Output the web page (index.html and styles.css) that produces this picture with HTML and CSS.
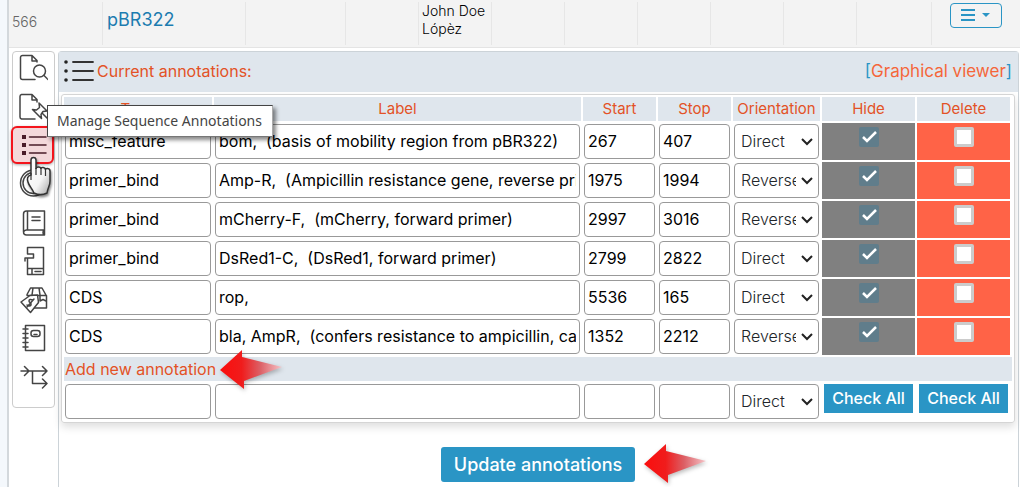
FILE: index.html
```html
<!DOCTYPE html>
<html lang="en">
<head>
<meta charset="utf-8">
<title>Sequence annotations</title>
<link rel="stylesheet" href="styles.css">
</head>
<body>
<div class="page">
  <div class="record">
    <div class="cell cell-id">566</div>
    <div class="cell"><a class="record-name" href="#plasmid">pBR322</a></div>
    <div class="cell"></div>
    <div class="cell"></div>
    <div class="cell cell-owner">John Doe Lópèz</div>
    <div class="cell"></div><div class="cell"></div><div class="cell"></div><div class="cell"></div><div class="cell"></div><div class="cell"></div>
    <div class="cell cell-menu">
      <button class="menu-button" type="button" aria-label="Record menu">
        <svg width="30" height="14" viewBox="0 0 30 14"><path d="M0 2h14M0 7h14M0 12h14" stroke="currentColor" stroke-width="2"/><path d="M21 5h8l-4 4z" fill="currentColor"/></svg>
      </button>
    </div>
  </div>

  <div class="workspace">
    <nav class="tools" aria-label="Sequence tools">
      <button class="tool" type="button" aria-label="View sequence">
        <svg class="icon" viewBox="0 0 30 30"><path d="M17 26.500H4.500a2 2 0 0 1-2-2V4.500a2 2 0 0 1 2-2H14l5 5V9M14 2.500V8h5"/><circle cx="21.500" cy="18" r="6"/><path d="m26 22.500 4 4"/></svg>
      </button>
      <button class="tool" type="button" aria-label="Pin file">
        <svg class="icon" viewBox="0 0 30 30"><path d="M17 27H3.500a2 2 0 0 1-1.500-2V4.500a2 2 0 0 1 1.500-2H14l5 5V10M14 2.500V8h5"/><path d="m21 11 8 8-4 .5-2 3 .5 4-9-9 4 .5 3-2.500zm3 10 6 6"/></svg>
      </button>
      <button class="tool tool-active" type="button" aria-label="Manage Sequence Annotations">
        <svg class="icon" viewBox="0 0 30 30"><path d="M11.500 7H28M11.500 15H28M11.500 23H28"/><path class="dots" d="M4 5h4v4H4zM4 13h4v4H4zM4 21h4v4H4z"/></svg>
      </button>
      <button class="tool" type="button" aria-label="Plasmid map">
        <svg class="icon" viewBox="0 0 30 30"><circle cx="15.500" cy="14" r="13"/><circle cx="15.500" cy="14" r="10.500"/></svg>
      </button>
      <button class="tool" type="button" aria-label="Library">
        <svg class="icon" viewBox="0 0 30 30"><path d="M26.500 22V3H8.500a3 3 0 0 0-3 3v18a3 3 0 0 0 3 3h18v-5h-18a3 3 0 0 0-3 2M9.500 3v19M14 9h8M14 12.500h8M26 22q-2 2.500 0 5"/></svg>
      </button>
      <button class="tool" type="button" aria-label="Storage">
        <svg class="icon" viewBox="0 0 30 30"><path d="M9.500 12v16.500h16V1.500h-16V8h6v4H7v3M9.500 22.500h16M14 22.500v6M17 25.500h6"/></svg>
      </button>
      <button class="tool" type="button" aria-label="Price and orders">
        <svg class="icon" viewBox="0 0 30 30"><path d="M9 9.500 12.500 3H24l4.500 8v12H16M9 10.500h19.500M15 3l-1 7M21 3l1 7v6l3-1.500 3 1.500"/><path class="tag" d="m3 17 9-6.500 7.500-.5 1 7.500-8 10z"/><path d="M15 15q-4-1.500-4 1c0 2 3 1.500 2 4-1 1.500-3 1-4 0m7-6-7 8"/></svg>
      </button>
      <button class="tool" type="button" aria-label="Notebook">
        <svg class="icon" viewBox="0 0 30 30"><path d="M7.500 2.500h19v25h-19zM5 6h5M5 10.500h5M5 15h5M5 19.500h5M5 24h5"/><rect x="13" y="7.500" width="9" height="6" rx="2.500"/><path d="M16 11.500h3"/></svg>
      </button>
      <button class="tool" type="button" aria-label="Cloning workflow">
        <svg class="icon" viewBox="0 0 30 30"><path d="M3 9h26M6.500 4.500 11 9l-4.500 4.500M24.500 4.500 29 9l-4.500 4.500M14.500 9v12.500H29M24.500 17l4.500 4.500-4.500 4.500"/></svg>
      </button>
      <span class="tooltip" role="tooltip">Manage Sequence Annotations</span>
      <svg class="pointer" viewBox="0 0 28 42" aria-hidden="true">
        <defs><linearGradient id="glove" x1="0" y1="0" x2="1" y2="1"><stop offset="0" stop-color="#fff"/><stop offset=".6" stop-color="#f4f4f4"/><stop offset="1" stop-color="#a5a5a5"/></linearGradient></defs>
        <path d="M6 4c0-3.500 5-3.500 5 0v9c0-3 5-2.500 5 0 0-2.500 4.500-2 4.500 1 0-2.500 4.500-2 4.500 1v10c0 5-2 6-3 12-4 2-9 2-13 0-2-5-5-7-6-11-1-3-1-6 3-7z" fill="url(#glove)" stroke="#333" stroke-width="1.500"/>
        <path d="M6 17v7M11 12v7M16 13v6M20.500 14v6" fill="none" stroke="#333" stroke-width="1.200"/>
      </svg>
    </nav>

    <main class="panel">
      <header class="panel-head">
        <svg class="list-icon" viewBox="0 0 30 24"><path d="M9 3h20M9 12h20M9 21h20" stroke="#333" stroke-width="1.800" stroke-linecap="round"/><g fill="#222"><circle cx="2" cy="3" r="1.800"/><circle cx="2" cy="12" r="1.800"/><circle cx="2" cy="21" r="1.800"/></g></svg>
        <h1 class="panel-title">Current annotations:</h1>
        <span class="viewer">[<a class="viewer-link" href="#viewer">Graphical viewer</a>]</span>
      </header>

      <form class="form">
        <div class="card">
          <table class="grid">
            <colgroup><col class="col-type"><col><col class="col-pos"><col class="col-pos"><col class="col-dir"><col class="col-flag"><col class="col-flag"><col class="col-end"></colgroup>
            <thead><tr><th>Type</th><th>Label</th><th>Start</th><th>Stop</th><th>Orientation</th><th>Hide</th><th>Delete</th></tr></thead>
            <tbody>
              <tr><td><input class="field" aria-label="Type" value="misc_feature"></td><td><input class="field" aria-label="Label" value="bom,  (basis of mobility region from pBR322)"></td><td><input class="field" aria-label="Start" value="267"></td><td><input class="field" aria-label="Stop" value="407"></td><td><select class="field select" aria-label="Orientation"><option selected>Direct</option><option>Reverse</option></select></td><td class="hide"><input class="check" type="checkbox" aria-label="Hide" checked></td><td class="delete"><input class="check" type="checkbox" aria-label="Delete"></td></tr>
              <tr><td><input class="field" aria-label="Type" value="primer_bind"></td><td><input class="field" aria-label="Label" value="Amp-R,  (Ampicillin resistance gene, reverse primer)"></td><td><input class="field" aria-label="Start" value="1975"></td><td><input class="field" aria-label="Stop" value="1994"></td><td><select class="field select" aria-label="Orientation"><option>Direct</option><option selected>Reverse</option></select></td><td class="hide"><input class="check" type="checkbox" aria-label="Hide" checked></td><td class="delete"><input class="check" type="checkbox" aria-label="Delete"></td></tr>
              <tr><td><input class="field" aria-label="Type" value="primer_bind"></td><td><input class="field" aria-label="Label" value="mCherry-F,  (mCherry, forward primer)"></td><td><input class="field" aria-label="Start" value="2997"></td><td><input class="field" aria-label="Stop" value="3016"></td><td><select class="field select" aria-label="Orientation"><option>Direct</option><option selected>Reverse</option></select></td><td class="hide"><input class="check" type="checkbox" aria-label="Hide" checked></td><td class="delete"><input class="check" type="checkbox" aria-label="Delete"></td></tr>
              <tr><td><input class="field" aria-label="Type" value="primer_bind"></td><td><input class="field" aria-label="Label" value="DsRed1-C,  (DsRed1, forward primer)"></td><td><input class="field" aria-label="Start" value="2799"></td><td><input class="field" aria-label="Stop" value="2822"></td><td><select class="field select" aria-label="Orientation"><option selected>Direct</option><option>Reverse</option></select></td><td class="hide"><input class="check" type="checkbox" aria-label="Hide" checked></td><td class="delete"><input class="check" type="checkbox" aria-label="Delete"></td></tr>
              <tr><td><input class="field" aria-label="Type" value="CDS"></td><td><input class="field" aria-label="Label" value="rop,"></td><td><input class="field" aria-label="Start" value="5536"></td><td><input class="field" aria-label="Stop" value="165"></td><td><select class="field select" aria-label="Orientation"><option selected>Direct</option><option>Reverse</option></select></td><td class="hide"><input class="check" type="checkbox" aria-label="Hide" checked></td><td class="delete"><input class="check" type="checkbox" aria-label="Delete"></td></tr>
              <tr><td><input class="field" aria-label="Type" value="CDS"></td><td><input class="field" aria-label="Label" value="bla, AmpR,  (confers resistance to ampicillin, carbenicillin)"></td><td><input class="field" aria-label="Start" value="1352"></td><td><input class="field" aria-label="Stop" value="2212"></td><td><select class="field select" aria-label="Orientation"><option>Direct</option><option selected>Reverse</option></select></td><td class="hide"><input class="check" type="checkbox" aria-label="Hide" checked></td><td class="delete"><input class="check" type="checkbox" aria-label="Delete"></td></tr>
              <tr><th class="add" colspan="8"><span class="marked">Add new annotation
                <svg class="arrow arrow-add" viewBox="0 0 64 42" aria-hidden="true"><defs><linearGradient id="fade"><stop offset="0" stop-color="#fb0d0d"/><stop offset=".35" stop-color="#f01c1c"/><stop offset=".65" stop-color="#dc6066"/><stop offset="1" stop-color="#f6c4c8"/></linearGradient></defs><path d="M1 21 23 1v7l40 10-38 14v8z" fill="url(#fade)"/></svg></span></th></tr>
              <tr><td><input class="field" aria-label="New type"></td><td><input class="field" aria-label="New label"></td><td><input class="field" aria-label="New start"></td><td><input class="field" aria-label="New stop"></td><td><select class="field select" aria-label="New orientation"><option selected>Direct</option><option>Reverse</option></select></td><td class="all"><button class="check-all" type="button">Check All</button></td><td class="all"><button class="check-all" type="button">Check All</button></td></tr>
            </tbody>
          </table>
        </div>
        <div class="actions"><span class="marked"><button class="update" type="button">Update annotations</button>
          <svg class="arrow arrow-update" viewBox="0 0 64 42" aria-hidden="true"><path d="M1 21 23 1v7l40 10-38 14v8z" fill="url(#fade)"/></svg></span></div>
      </form>
    </main>
  </div>
</div>
</body>
</html>
```
FILE: styles.css
```css
* { box-sizing: border-box; }

body {
  margin: 0;
  background: #f4f8fc;
  color: #000;
  font-family: Inter, "Liberation Sans", sans-serif;
  font-size: 16px;
  font-weight: 300;
}

button, input, select { font: inherit; }

.page {
  display: flex;
  flex-direction: column;
  min-height: 100vh;
  margin-left: 7px;
  border-left: 2px solid #d3d8dc;
  background: #fff;
}

/* Record row */
.record {
  display: grid;
  grid-template-columns: 94px 143px 100px repeat(7, 73px) 75px 1fr;
  min-height: 48px;
  padding: 2px 0;
  border-bottom: 1px solid #e4e4e4;
  background: #f3f3f3;
}
.cell { padding: 0 3px; border-right: 1px solid #e6e6e6; }
.cell:last-child { border-right: 0; }
.cell-id { color: #666; font-size: 14px; line-height: 40px; }
.record-name { padding-left: 1px; color: #1c7cb0; font-size: 18px; font-weight: 400; line-height: 36px; text-decoration: none; }
.cell-owner { font-size: 14px; line-height: 18px; }
.cell-menu { display: flex; justify-content: flex-end; padding: 1px 18px 0 0; }
.menu-button {
  display: flex;
  align-items: center;
  justify-content: center;
  width: 52px;
  height: 25px;
  padding: 0 0 2px;
  border: 1px solid #2a95c5;
  border-radius: 4px;
  background: transparent;
  color: #2a95c5;
}

/* Tool column */
.workspace { display: flex; flex: 1; align-items: flex-start; gap: 3px; padding: 3px 1px 0 3px; }
.tools {
  position: relative;
  display: flex;
  flex: none;
  flex-direction: column;
  align-items: center;
  justify-content: space-between;
  width: 43px;
  height: 357px;
  padding: 1px 2px 15px 0;
  border: 1px solid #ccc;
  border-radius: 4px;
}
.tool {
  display: flex;
  align-items: center;
  justify-content: center;
  width: 30px;
  height: 30px;
  padding: 0;
  border: 0;
  background: none;
}
.tool-active {
  width: 43px;
  height: 38px;
  margin: -4px;
  border: 2px solid #f4141c;
  border-radius: 6px;
  background: #f3d8da;
  box-shadow: 0 1px 3px #0005;
}
.icon { width: 30px; height: 30px; fill: none; stroke: #444; stroke-width: 1.5; stroke-linejoin: round; stroke-linecap: round; }
.icon .dots { fill: #4a1c28; stroke: none; }
.icon .tag { fill: #fff; }
.tool-active .icon { flex: none; stroke: #4a1c28; }
.tooltip {
  position: absolute;
  z-index: 3;
  top: 53px;
  left: 34px;
  padding: 0 10px 0 9px;
  border: 1px solid #444;
  border-color: #444 #aaa #777 #444;
  background: #fff;
  box-shadow: 3px 3px 4px #0007;
  color: #444;
  font: 14px/30px "Noto Sans", sans-serif;
  white-space: nowrap;
}
.pointer { position: absolute; z-index: 4; top: 104px; left: 12px; width: 28px; height: 42px; filter: drop-shadow(1px 2px 1px #0007); }

/* Annotation panel */
.panel {
  flex: 1;
  align-self: stretch;
  min-width: 0;
  border: 1px solid #ccd3d8;
  border-bottom: 0;
  border-radius: 4px 4px 0 0;
}
.panel-head { display: flex; align-items: center; height: 40px; padding: 0 6px 2px 5px; background: #dfe6ed; }
.list-icon { width: 30px; height: 24px; }
.panel-title { flex: 1; margin: 0 0 0 3px; color: #e35226; font-size: 16px; font-weight: 400; }
.viewer { color: #2a95c5; font-size: 17px; font-weight: 400; }
.viewer-link { color: #f5663a; text-decoration: none; }
.form { padding: 2px 3px 0 2px; }
.card { border: 1px solid #d5d5d5; border-radius: 3px; box-shadow: 0 4px 8px #0002; }

.grid { width: 100%; border-spacing: 2px; table-layout: fixed; }
.col-type { width: 148px; }
.col-pos { width: 73px; }
.col-dir { width: 87px; }
.col-flag { width: 93px; }
.col-end { width: 0; }
.grid th { height: 24px; padding: 0; background: #dfe6ed; color: #e35226; font-size: 15px; font-weight: 400; line-height: 24px; }
.grid td { padding: 1px; vertical-align: top; }
.grid .add { padding-left: 1px; font-size: 16px; text-align: left; }
.field {
  display: block;
  width: 100%;
  height: 35px;
  padding: 0 3px 2px;
  border: 1px solid #999;
  border-radius: 4px;
  background-color: #fff;
  color: #000;
  font-weight: 400;
  white-space: pre;
}
.select {
  padding: 0 22px 2px 6px;
  appearance: none;
  background-image: url("data:image/svg+xml,%3Csvg xmlns='http://www.w3.org/2000/svg' width='12' height='8'%3E%3Cpath d='m1 1 5 5 5-5' fill='none' stroke='%23222' stroke-width='2'/%3E%3C/svg%3E");
  background-position: right 5px center;
  background-repeat: no-repeat;
  color: #212529;
  font-weight: 300;
}
.grid .hide { padding-top: 4px; background: gray; }
.grid .delete { padding-top: 4px; background: #ff6347; }
.check {
  display: block;
  width: 20px;
  height: 20px;
  margin: 0 auto;
  border: 3px solid #ccc;
  border-radius: 2px;
  appearance: none;
  background: #fff;
}
.check:checked {
  border: 0;
  background: #607d8b url("data:image/svg+xml,%3Csvg xmlns='http://www.w3.org/2000/svg' width='20' height='20'%3E%3Cpath d='m4 10 4 4L17 5' fill='none' stroke='white' stroke-width='2.500'/%3E%3C/svg%3E") center;
}
.grid .all { padding: 1px 2px; }
.check-all { display: block; width: 100%; height: 29px; padding: 0 0 2px; border: 0; background: #2a95c5; color: #fff; font-weight: 500; }

.actions { display: flex; justify-content: center; padding: 24px 0 4px; }
.update { height: 35px; padding: 0 10px 1px; border: 0; border-radius: 3px; background: #2a95c5; color: #fff; font-size: 18px; font-weight: 500; }
.update { min-width: 194px; }
.marked { position: relative; display: inline-block; }
.arrow { position: absolute; left: 100%; width: 64px; height: 42px; filter: drop-shadow(1px 2px 2px #0004); }
.arrow-add { top: -8px; margin-left: 3px; }
.arrow-update { top: -4px; margin-left: 8px; }
```
